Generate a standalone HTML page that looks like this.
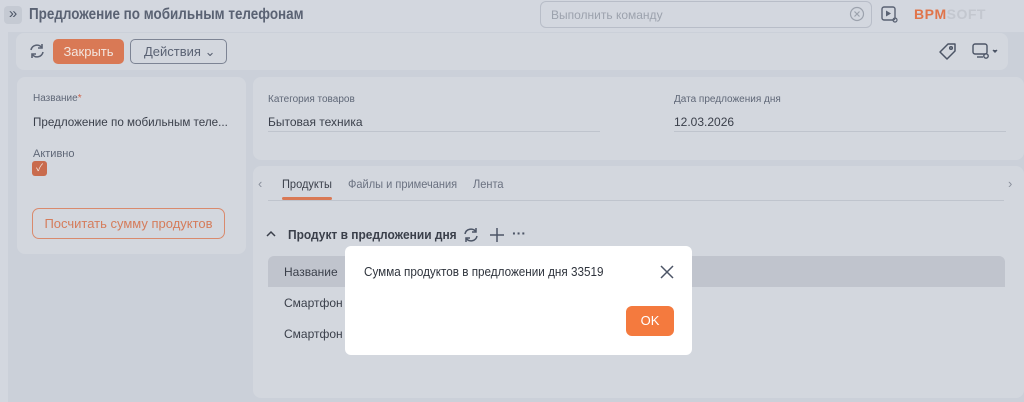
<!DOCTYPE html>
<html><head><meta charset="utf-8"><style>
*{box-sizing:border-box;margin:0;padding:0}
body{width:1024px;height:402px;overflow:hidden;background:#d3d7df;font-family:"Liberation Sans","Noto Sans CJK SC",sans-serif;position:relative;color:#3a3f4a}
.abs{position:absolute;white-space:nowrap}
.panel{position:absolute;background:#d3d7de;border-radius:8px}
.sx{transform-origin:left center}
</style></head><body>
<div class="abs" style="left:8px;top:32px;width:1016px;height:370px;background:#cbd0d9"></div>
<div class="abs" style="left:4px;top:6px;width:18px;height:18px;background:#c5cad3;border-radius:4px;color:#4c5566;font-size:15px;line-height:16px;text-align:center">»</div>
<div class="abs sx" style="left:29px;top:6px;font-size:16px;color:#5a6273;font-weight:bold;transform:scaleX(0.84)">Предложение по мобильным телефонам</div>
<div class="abs" style="left:540px;top:1px;width:332px;height:27px;border:1px solid #b8bdc8;border-radius:6px;background:#d3d7df"></div>
<div class="abs" style="left:551px;top:8px;font-size:12px;color:#9ca2ad">Выполнить команду</div>
<svg class="abs" style="left:849px;top:6px" width="16" height="16"><circle cx="8" cy="8" r="6.5" fill="none" stroke="#9ca2ad" stroke-width="1.2"/><path d="M5.5 5.5l5 5M10.5 5.5l-5 5" stroke="#9ca2ad" stroke-width="1.2"/></svg>
<svg class="abs" style="left:881px;top:6px" width="18" height="18"><rect x="1" y="1" width="13" height="13" rx="2" fill="none" stroke="#5a6273" stroke-width="1.4"/><path d="M5 4.5v6l5-3z" fill="#5a6273"/><circle cx="14" cy="14" r="2" fill="none" stroke="#5a6273" stroke-width="1.2"/></svg>
<div class="abs" style="left:914px;top:6px;font-size:14px;font-weight:bold;letter-spacing:0.5px"><span style="color:#e0744a">BPM</span><span style="color:#c3c7cf">SOFT</span></div>

<div class="panel" style="left:16px;top:33px;width:992px;height:37px"></div>
<svg class="abs" style="left:28px;top:42px" width="18" height="18" fill="none" stroke="#5a6273" stroke-width="1.6"><path d="M3 8a6 6 0 0 1 11-2M15 10a6 6 0 0 1-11 2"/><path d="M14 2v4h-4M4 16v-4h4"/></svg>
<div class="abs" style="left:53px;top:39px;width:71px;height:25px;background:#d97955;border-radius:5px;color:#f3e6df;font-size:13px;text-align:center;line-height:25px">Закрыть</div>
<div class="abs" style="left:130px;top:39px;width:97px;height:25px;border:1px solid #7d8494;border-radius:5px;color:#5a6273;font-size:13px;line-height:23px;padding-left:13px">Действия ⌄</div>
<svg class="abs" style="left:938px;top:42px" width="20" height="20" fill="none" stroke="#4c5566" stroke-width="1.5"><path d="M10 2h7v7l-8 8-7-7z" stroke-linejoin="round"/><circle cx="13" cy="6" r="1.3"/></svg>
<svg class="abs" style="left:972px;top:43px" width="26" height="18" fill="none" stroke="#4c5566" stroke-width="1.4"><rect x="1" y="1" width="14" height="10" rx="2"/><path d="M5 14h6"/><circle cx="14" cy="13" r="2.2"/><path d="M21 7l2 2 2-2" fill="#4c5566"/></svg>

<div class="panel" style="left:17px;top:77px;width:229px;height:177px"></div>
<div class="abs" style="left:33px;top:93px;font-size:10px;color:#5f6777">Название<span style="color:#d0634a">*</span></div>
<div class="abs sx" style="left:33px;top:115px;font-size:12px;color:#3a3f4a;transform:scaleX(0.97)">Предложение по мобильным теле...</div>
<div class="abs" style="left:33px;top:148px;font-size:11px;color:#5f6777">Активно</div>
<div class="abs" style="left:32px;top:161px;width:15px;height:15px;background:#c96b4d;border-radius:3px;color:#f3e6df;font-size:10px;text-align:center;line-height:15px">✓</div>
<div class="abs" style="left:32px;top:208px;width:193px;height:31px;border:1px solid #d98a6d;border-radius:7px;color:#d57c5b;font-size:13px;text-align:center;line-height:29px">Посчитать сумму продуктов</div>

<div class="panel" style="left:253px;top:77px;width:771px;height:83px"></div>
<div class="abs" style="left:268px;top:94px;font-size:10px;color:#5f6777">Категория товаров</div>
<div class="abs" style="left:268px;top:115px;font-size:12px">Бытовая техника</div>
<div class="abs" style="left:268px;top:131px;width:332px;height:1px;background:#bfc4cd"></div>
<div class="abs" style="left:674px;top:94px;font-size:10px;color:#5f6777">Дата предложения дня</div>
<div class="abs" style="left:674px;top:115px;font-size:12px">12.03.2026</div>
<div class="abs" style="left:674px;top:131px;width:332px;height:1px;background:#bfc4cd"></div>

<div class="panel" style="left:253px;top:166px;width:771px;height:232px"></div>
<div class="abs" style="left:258px;top:176px;font-size:13px;color:#8a909c">‹</div>
<div class="abs" style="left:1008px;top:176px;font-size:13px;color:#8a909c">›</div>
<div class="abs sx" style="left:282px;top:177px;font-size:12px;color:#3a3f4a;transform:scaleX(0.92)">Продукты</div>
<div class="abs" style="left:282px;top:197px;width:50px;height:3px;background:#d97955;border-radius:2px"></div>
<div class="abs sx" style="left:348px;top:177px;font-size:12px;color:#6a7180;transform:scaleX(0.92)">Файлы и примечания</div>
<div class="abs sx" style="left:473px;top:177px;font-size:12px;color:#6a7180;transform:scaleX(0.92)">Лента</div>
<div class="abs" style="left:268px;top:200px;width:736px;height:1px;background:#bfc4cd"></div>
<svg class="abs" style="left:266px;top:230px" width="10" height="8"><path d="M1 6l4-4 4 4" fill="none" stroke="#3a3f4a" stroke-width="1.5"/></svg>
<div class="abs sx" style="left:288px;top:227px;font-size:13px;font-weight:bold;color:#3a3f4a;transform:scaleX(0.92)">Продукт в предложении дня</div>
<svg class="abs" style="left:463px;top:227px" width="16" height="16" fill="none" stroke="#4c5566" stroke-width="1.5"><path d="M2 7a6 6 0 0 1 11-2M14 9a6 6 0 0 1-11 2"/><path d="M13 1v4h-4M3 15v-4h4"/></svg>
<svg class="abs" style="left:489px;top:227px" width="16" height="16"><path d="M8 1v14M1 8h14" stroke="#4c5566" stroke-width="1.5"/></svg>
<div class="abs" style="left:512px;top:225px;font-size:14px;color:#4c5566;font-weight:bold">···</div>
<div class="abs" style="left:268px;top:256px;width:737px;height:31px;background:#c0c4cd;border-radius:6px 6px 0 0"></div>
<div class="abs" style="left:284px;top:265px;font-size:12px;color:#3a3f4a">Название</div>
<div class="abs" style="left:284px;top:296px;font-size:12px;color:#3a3f4a">Смартфон X</div>
<div class="abs" style="left:284px;top:327px;font-size:12px;color:#3a3f4a">Смартфон X</div>

<div class="abs" style="left:345px;top:246px;width:347px;height:109px;background:#fff;border-radius:6px"></div>
<div class="abs sx" style="left:364px;top:264px;font-size:13px;color:#2f343d;transform:scaleX(0.9)">Сумма продуктов в предложении дня 33519</div>
<svg class="abs" style="left:660px;top:265px" width="14" height="14"><path d="M1 1l12 12M13 1L1 13" stroke="#4c5566" stroke-width="1.5"/></svg>
<div class="abs" style="left:626px;top:306px;width:48px;height:30px;background:#f47a3e;border-radius:6px;color:#fff;font-size:13px;text-align:center;line-height:30px">OK</div>
</body></html>
